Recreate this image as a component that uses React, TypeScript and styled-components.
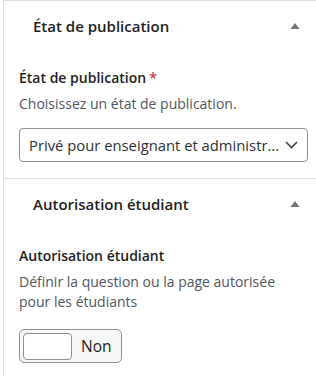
import React from "react";
import styled, { createGlobalStyle } from "styled-components";

const Global = createGlobalStyle`
  html, body { margin: 0; padding: 0; background: #fff; }
  body { font-family: "Open Sans", "Noto Sans", sans-serif; color: #1e1e1e; }
  * { box-sizing: border-box; }
`;

const Sidebar = styled.div`
  width: 316px;
  height: 376px;
  padding-left: 3px;
  overflow: hidden;
`;

const Panel = styled.div`
  border-left: 1px solid #e0e0e0;
  border-top: 1px solid #e0e0e0;
  height: 100%;
`;

const Section = styled.section<{ $last?: boolean }>`
  border-bottom: ${(p) => (p.$last ? "none" : "1px solid #e0e0e0")};
`;

const Header = styled.button`
  all: unset;
  box-sizing: border-box;
  display: flex;
  align-items: center;
  justify-content: space-between;
  width: 100%;
  height: 49px;
  padding: 0 16px 0 29px;
  font-family: "Open Sans", "Noto Sans", sans-serif;
  font-size: 15px;
  font-weight: 600;
  color: #1e1e1e;
`;

const Body = styled.div`
  padding: 0 8px 16px 15px;
`;

const Label = styled.div`
  font-size: 14px;
  font-weight: 600;
  line-height: 20px;
  padding-top: 18px;
  color: #1e1e1e;
`;

const Required = styled.span`
  color: #d63638;
  margin-left: 3px;
`;

const Help = styled.div`
  font-size: 14px;
  line-height: 20px;
  color: #50575e;
  margin-top: 6px;
`;

const SelectBox = styled.div`
  margin-top: 14px;
  height: 34px;
  border: 1px solid #8c8f94;
  border-radius: 4px;
  display: flex;
  align-items: center;
  justify-content: space-between;
  padding: 0 9px 0 9px;
  font-size: 14.8px;
  color: #2c3338;
`;

const SelectText = styled.span`
  white-space: nowrap;
  overflow: hidden;
`;

const Toggle = styled.div`
  margin-top: 17px;
  width: 103px;
  height: 34px;
  border: 1px solid #8c8f94;
  border-radius: 5px;
  background: #f6f7f7;
  display: flex;
  align-items: center;
  padding: 0 3px;
  gap: 9px;
`;

const ToggleKnob = styled.div`
  width: 49px;
  height: 27px;
  border: 1px solid #8c8f94;
  border-radius: 4px;
  background: #fff;
`;

const ToggleText = styled.span`
  font-size: 15.5px;
  color: #1e1e1e;
`;

const Arrow = () => (
  <svg width="10" height="8" viewBox="0 0 10 8">
    <path d="M5 1 L9.5 7 L0.5 7 Z" fill="#757575" />
  </svg>
);

const Chevron = () => (
  <svg width="13" height="10" viewBox="0 0 13 10">
    <path d="M1 2 L6.5 7.5 L12 2" fill="none" stroke="#3c434a" strokeWidth="1.6" />
  </svg>
);

export default function App() {
  return (
    <>
      <Global />
      <Sidebar>
        <Panel>
          <Section>
            <Header>
              <span>État de publication</span>
              <Arrow />
            </Header>
            <Body>
              <Label>
                État de publication<Required>*</Required>
              </Label>
              <Help>Choisissez un état de publication.</Help>
              <SelectBox>
                <SelectText>Privé pour enseignant et administr...</SelectText>
                <Chevron />
              </SelectBox>
            </Body>
          </Section>
          <Section $last>
            <Header>
              <span>Autorisation étudiant</span>
              <Arrow />
            </Header>
            <Body>
              <Label>Autorisation étudiant</Label>
              <Help>Définir la question ou la page autorisée pour les étudiants</Help>
              <Toggle>
                <ToggleKnob />
                <ToggleText>Non</ToggleText>
              </Toggle>
            </Body>
          </Section>
        </Panel>
      </Sidebar>
    </>
  );
}
